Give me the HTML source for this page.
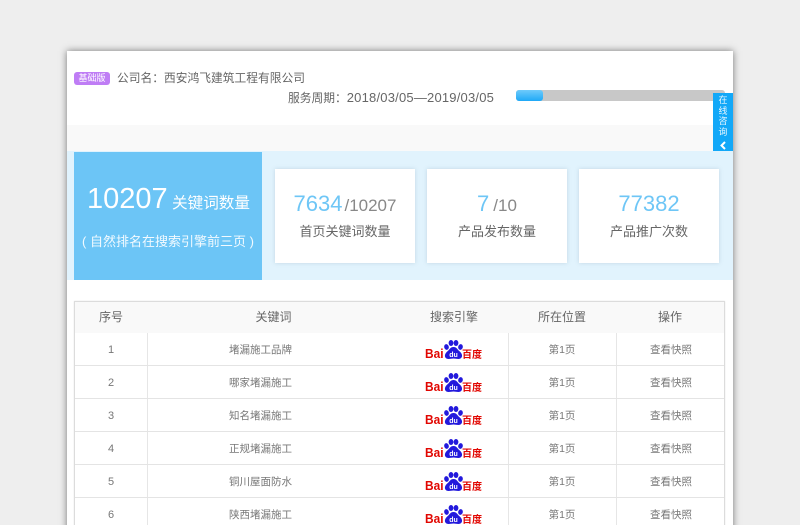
<!DOCTYPE html>
<html lang="zh">
<head>
<meta charset="utf-8">
<style>
*{box-sizing:border-box;margin:0;padding:0}
html,body{width:800px;height:525px;overflow:hidden;background:#eee}
body{position:relative;font-family:"Liberation Sans","Noto Sans CJK SC",sans-serif;color:#666;filter:blur(.35px)}
.a{position:absolute;white-space:nowrap}
.tc{font-family:"Noto Sans CJK TC",sans-serif}
.card{position:absolute;left:67px;top:51px;width:666px;height:500px;background:#fff;box-shadow:0 0 7px 0 rgba(0,0,0,.5)}
.stat{position:absolute;top:169px;width:140px;height:94px;background:#fff;box-shadow:0 0 4px rgba(120,150,170,.3);text-align:center}
.stat .n{position:absolute;left:0;right:0;top:22px;font-size:22px;line-height:26px;color:#6ec6f6}
.stat .n span{font-size:17px;color:#888;margin-left:2px}
.stat .l{position:absolute;left:0;right:0;top:54px;font-size:13px;line-height:18px;color:#666}
.t{position:absolute;font-size:10.5px;line-height:14px;text-align:center;color:#777;white-space:nowrap}
.h{position:absolute;font-size:12px;line-height:16px;text-align:center;color:#666;top:309px}
.hl{position:absolute;left:75px;width:649px;height:1px;background:#e4e4e4}
.vl{position:absolute;top:333px;width:1px;height:192px;background:#e6e6e6}
.logo{position:absolute;left:425px;width:58px;height:24px}
.k{left:147px;width:227px}
.c3{left:508px;width:108px}
.c4{left:617px;width:108px}
.c1{left:75px;width:72px;font-size:11px}
</style>
</head>
<body>
<div class="card"></div>

<div class="a" style="left:74px;top:72px;width:36px;height:13px;background:#bf7df5;border-radius:3px;color:#fff;font-size:9px;line-height:13px;text-align:center">基础版</div>
<div class="a" style="left:117px;top:69px;font-size:11.75px;line-height:17px;color:#666">公司名<span class="tc">：</span>西安鸿飞建筑工程有限公司</div>
<div class="a" style="left:288px;top:89px;font-size:11.75px;line-height:17px;color:#666">服务周期<span class="tc">：</span><span style="font-size:13px;letter-spacing:.2px">2018/03/05—2019/03/05</span></div>

<div class="a" style="left:516px;top:90px;width:209px;height:11px;background:#c8c8c8;border-radius:3px"></div>
<div class="a" style="left:516px;top:90px;width:27px;height:11px;border-radius:3px;background:linear-gradient(#6fcbfb,#1fa9f7)"></div>

<div class="a" style="left:67px;top:125px;width:666px;height:26px;background:#f9f9f9"></div>
<div class="a" style="left:67px;top:151px;width:666px;height:129px;background:#e1f3fd"></div>
<div class="a" style="left:74px;top:152px;width:188px;height:128px;background:#6cc5f6"></div>
<div class="a" style="left:87px;top:181px;font-size:29px;line-height:36px;color:#fff">10207</div>
<div class="a" style="left:172px;top:194px;font-size:15.6px;line-height:20px;color:#fff">关键词数量</div>
<div class="a" style="left:74px;top:233px;width:188px;text-align:center;font-size:13px;line-height:17px;color:#f2faff">( 自然排名在搜索引擎前三页 )</div>

<div class="stat" style="left:275px"><div class="n">7634<span>/10207</span></div><div class="l">首页关键词数量</div></div>
<div class="stat" style="left:427px"><div class="n">7<span style="margin-left:4px">/10</span></div><div class="l">产品发布数量</div></div>
<div class="stat" style="left:579px"><div class="n">77382</div><div class="l">产品推广次数</div></div>

<!-- table -->
<div class="a" style="left:74px;top:301px;width:651px;height:240px;border:1px solid #dcdcdc;box-shadow:0 0 1px #ddd"></div>
<div class="a" style="left:75px;top:302px;width:649px;height:31px;background:#f9f9f9"></div>
<div class="h" style="left:75px;width:72px">序号</div>
<div class="h" style="left:147px;width:253px">关键词</div>
<div class="h" style="left:400px;width:108px">搜索引擎</div>
<div class="h" style="left:508px;width:108px">所在位置</div>
<div class="h" style="left:616px;width:108px">操作</div>

<div class="vl" style="left:147px"></div>
<div class="vl" style="left:508px"></div>
<div class="vl" style="left:616px"></div>
<div class="hl" style="top:365px"></div>
<div class="hl" style="top:398px"></div>
<div class="hl" style="top:431px"></div>
<div class="hl" style="top:464px"></div>
<div class="hl" style="top:497px"></div>

<div class="a" style="left:713px;top:93px;width:20px;height:58px;background:#12a8f8;color:#e8f7ff;font-size:9px;line-height:10.5px;text-align:center;padding-top:2px;white-space:normal">在<br>线<br>咨<br>询
<svg style="position:absolute;left:6px;top:48px" width="8" height="9" viewBox="0 0 8 9"><path d="M6 1 2.500 4.500 6 8" fill="none" stroke="#fff" stroke-width="2"/></svg></div>

<svg width="0" height="0" style="position:absolute">
<defs>
<g id="paw" fill="#2319dc">
<ellipse cx="21.500" cy="7" rx="2.300" ry="2.900" transform="rotate(-15 21.500 7)"/>
<ellipse cx="26" cy="3" rx="2.400" ry="3"/>
<ellipse cx="31" cy="3" rx="2.400" ry="3"/>
<ellipse cx="35.500" cy="7" rx="2.300" ry="2.900" transform="rotate(15 35.500 7)"/>
<path d="M28.500 7c3.200 0 3.800 2.500 6 4.300 3.800 3 3.300 7.700-1 7.700-2 0-3.300-.5-5-.5s-3 .5-5 .5c-4.300 0-4.800-4.700-1-7.700 2.200-1.800 2.800-4.300 6-4.300z"/>
</g>
</defs>
</svg>

<!-- rows -->
<div class="t c1" style="top:343px">1</div><div class="t k" style="top:343px">堵漏施工品牌</div><div class="t c3" style="top:343px">第1页</div><div class="t c4" style="top:343px">查看快照</div>
<div class="t c1" style="top:376px">2</div><div class="t k" style="top:376px">哪家堵漏施工</div><div class="t c3" style="top:376px">第1页</div><div class="t c4" style="top:376px">查看快照</div>
<div class="t c1" style="top:409px">3</div><div class="t k" style="top:409px">知名堵漏施工</div><div class="t c3" style="top:409px">第1页</div><div class="t c4" style="top:409px">查看快照</div>
<div class="t c1" style="top:442px">4</div><div class="t k" style="top:442px">正规堵漏施工</div><div class="t c3" style="top:442px">第1页</div><div class="t c4" style="top:442px">查看快照</div>
<div class="t c1" style="top:475px">5</div><div class="t k" style="top:475px">铜川屋面防水</div><div class="t c3" style="top:475px">第1页</div><div class="t c4" style="top:475px">查看快照</div>
<div class="t c1" style="top:508px">6</div><div class="t k" style="top:508px">陕西堵漏施工</div><div class="t c3" style="top:508px">第1页</div><div class="t c4" style="top:508px">查看快照</div>

<svg class="logo" style="top:340px" viewBox="0 0 58 24"><use href="#paw"/><text x="0" y="18" textLength="18.500" lengthAdjust="spacingAndGlyphs" font-family="Liberation Sans" font-weight="700" font-size="12.500" fill="#e10601">Bai</text><text x="37" y="18" font-family="Noto Sans CJK SC" font-weight="700" font-size="10" fill="#e10601">百度</text><text x="28.500" y="17" text-anchor="middle" font-family="Liberation Sans" font-size="7" font-weight="700" fill="#fff">du</text></svg>
<svg class="logo" style="top:373px" viewBox="0 0 58 24"><use href="#paw"/><text x="0" y="18" textLength="18.500" lengthAdjust="spacingAndGlyphs" font-family="Liberation Sans" font-weight="700" font-size="12.500" fill="#e10601">Bai</text><text x="37" y="18" font-family="Noto Sans CJK SC" font-weight="700" font-size="10" fill="#e10601">百度</text><text x="28.500" y="17" text-anchor="middle" font-family="Liberation Sans" font-size="7" font-weight="700" fill="#fff">du</text></svg>
<svg class="logo" style="top:406px" viewBox="0 0 58 24"><use href="#paw"/><text x="0" y="18" textLength="18.500" lengthAdjust="spacingAndGlyphs" font-family="Liberation Sans" font-weight="700" font-size="12.500" fill="#e10601">Bai</text><text x="37" y="18" font-family="Noto Sans CJK SC" font-weight="700" font-size="10" fill="#e10601">百度</text><text x="28.500" y="17" text-anchor="middle" font-family="Liberation Sans" font-size="7" font-weight="700" fill="#fff">du</text></svg>
<svg class="logo" style="top:439px" viewBox="0 0 58 24"><use href="#paw"/><text x="0" y="18" textLength="18.500" lengthAdjust="spacingAndGlyphs" font-family="Liberation Sans" font-weight="700" font-size="12.500" fill="#e10601">Bai</text><text x="37" y="18" font-family="Noto Sans CJK SC" font-weight="700" font-size="10" fill="#e10601">百度</text><text x="28.500" y="17" text-anchor="middle" font-family="Liberation Sans" font-size="7" font-weight="700" fill="#fff">du</text></svg>
<svg class="logo" style="top:472px" viewBox="0 0 58 24"><use href="#paw"/><text x="0" y="18" textLength="18.500" lengthAdjust="spacingAndGlyphs" font-family="Liberation Sans" font-weight="700" font-size="12.500" fill="#e10601">Bai</text><text x="37" y="18" font-family="Noto Sans CJK SC" font-weight="700" font-size="10" fill="#e10601">百度</text><text x="28.500" y="17" text-anchor="middle" font-family="Liberation Sans" font-size="7" font-weight="700" fill="#fff">du</text></svg>
<svg class="logo" style="top:505px" viewBox="0 0 58 24"><use href="#paw"/><text x="0" y="18" textLength="18.500" lengthAdjust="spacingAndGlyphs" font-family="Liberation Sans" font-weight="700" font-size="12.500" fill="#e10601">Bai</text><text x="37" y="18" font-family="Noto Sans CJK SC" font-weight="700" font-size="10" fill="#e10601">百度</text><text x="28.500" y="17" text-anchor="middle" font-family="Liberation Sans" font-size="7" font-weight="700" fill="#fff">du</text></svg>
</body>
</html>
